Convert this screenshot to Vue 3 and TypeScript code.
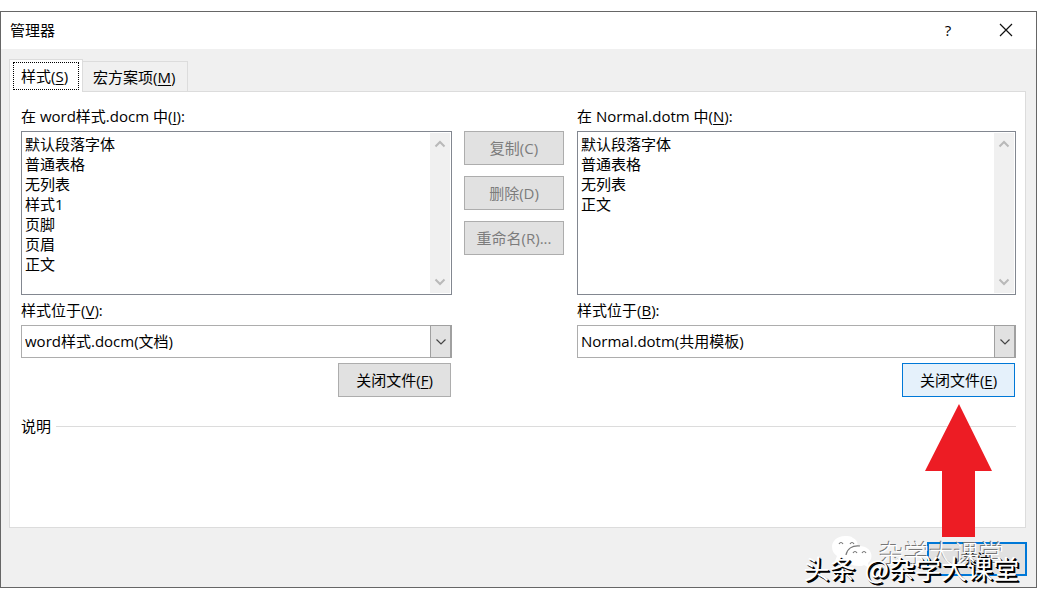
<script setup lang="ts">
import { ref } from 'vue'

interface Pane {
  id: string
  titleBefore: string
  titleKey: string
  styles: string[]
  sourceKey: string
  source: string
  closeKey: string
  active: boolean
}

const left: Pane = {
  id: 'left',
  titleBefore: '在 word样式.docm 中',
  titleKey: 'I',
  styles: ['默认段落字体', '普通表格', '无列表', '样式1', '页脚', '页眉', '正文'],
  sourceKey: 'V',
  source: 'word样式.docm(文档)',
  closeKey: 'F',
  active: false,
}

const right: Pane = {
  id: 'right',
  titleBefore: '在 Normal.dotm 中',
  titleKey: 'N',
  styles: ['默认段落字体', '普通表格', '无列表', '正文'],
  sourceKey: 'B',
  source: 'Normal.dotm(共用模板)',
  closeKey: 'E',
  active: true,
}

const panes: Pane[] = [left, right]
const actions: string[] = ['复制(C)', '删除(D)', '重命名(R)...']
const tab = ref<'styles' | 'macros'>('styles')
</script>

<template>
  <main class="dialog">
    <header class="titlebar">
      <h1 class="title">管理器</h1>
      <button class="caption" type="button">?</button>
      <button class="caption" type="button" aria-label="关闭窗口">
        <svg width="14" height="14" viewBox="0 0 14 14">
          <path d="M1 1L13 13M13 1L1 13" stroke="#111" stroke-width="1.2" fill="none" />
        </svg>
      </button>
    </header>

    <div class="tabs" role="tablist">
      <button class="tab" :class="{ current: tab === 'styles' }" role="tab" type="button" @click="tab = 'styles'">
        <span class="tab-text">样式(<u>S</u>)</span>
      </button>
      <button class="tab" :class="{ current: tab === 'macros' }" role="tab" type="button" @click="tab = 'macros'">
        <span class="tab-text">宏方案项(<u>M</u>)</span>
      </button>
    </div>

    <section class="panel">
      <div class="columns">
        <div v-for="pane in panes" :key="pane.id" class="pane" :class="pane.id">
          <label class="label" :for="pane.id + '-list'">{{ pane.titleBefore }}(<u>{{ pane.titleKey }}</u>):</label>
          <div class="listbox">
            <select :id="pane.id + '-list'" class="list" multiple size="7">
              <option v-for="name in pane.styles" :key="name" class="item">{{ name }}</option>
            </select>
            <div class="scrollbar">
              <svg width="12" height="8" viewBox="0 0 12 8">
                <path d="M1.5 6.5L6 2L10.5 6.5" stroke="#b9b9b9" stroke-width="2" fill="none" />
              </svg>
              <svg width="12" height="8" viewBox="0 0 12 8">
                <path d="M1.5 1.5L6 6L10.5 1.5" stroke="#b9b9b9" stroke-width="2" fill="none" />
              </svg>
            </div>
          </div>
          <label class="label source-label" :for="pane.id + '-source'">样式位于(<u>{{ pane.sourceKey }}</u>):</label>
          <div class="combo">
            <select :id="pane.id + '-source'" class="source">
              <option>{{ pane.source }}</option>
            </select>
            <span class="drop">
              <svg width="12" height="8" viewBox="0 0 12 8">
                <path d="M1.5 1.5L6 6L10.5 1.5" stroke="#444" stroke-width="1.2" fill="none" />
              </svg>
            </span>
          </div>
          <button class="button close" :class="{ hot: pane.active }" type="button">关闭文件(<u>{{ pane.closeKey }}</u>)</button>
        </div>
        <div class="actions">
          <button v-for="action in actions" :key="action" class="button" type="button" disabled>{{ action }}</button>
        </div>
      </div>
      <div class="description">
        <h2 class="description-title">说明</h2>
        <span class="rule"></span>
      </div>
    </section>

    <footer class="footer">
      <button class="button default" type="button">关闭</button>
    </footer>

    <svg class="arrow" width="67" height="133" viewBox="0 0 67 133">
      <path d="M34 0L67 67H50V133H17V67H0Z" fill="#ed1c24" />
    </svg>

    <div class="channel">
      <svg width="42" height="34" viewBox="0 0 42 34">
        <path d="M14 1C6 1 1 6 1 12C1 16 3 19 6 21L4 26L10 23C12 24 15 24 17 23C28 22 30 6 22 3C20 1 17 1 14 1Z" fill="#fff" />
        <path d="M28 11C20 11 15 16 15 21C15 27 20 31 28 31C30 31 32 31 33 30L38 33L37 28C44 22 40 11 28 11Z" fill="#fff" />
        <path d="M15 20C16 14 21 10 29 11M8 9Q10 6 12 9M19 9Q21 6 23 9M22 18Q24 15 26 18M31 18Q33 15 35 18" stroke="#777" stroke-width="1.2" fill="none" />
      </svg>
      <span>杂学大课堂</span>
    </div>
    <div class="credit"><span>头条</span><span>@杂学大课堂</span></div>
  </main>
</template>

<style>
body {
  margin: 0;
  background: #fff;
}
</style>

<style scoped>
.dialog {
  position: relative;
  box-sizing: border-box;
  margin-top: 11px;
  border: 1px solid #666;
  background: #f0f0f0;
  color: #000;
  font: 15px/20px "Open Sans", "Noto Sans CJK SC", sans-serif;
}
.dialog button,
.dialog select {
  box-sizing: border-box;
  margin: 0;
  border-radius: 0;
  color: #000;
  font: inherit;
}
u {
  text-underline-offset: 2px;
  text-decoration-thickness: 1px;
}
.titlebar {
  display: flex;
  align-items: center;
  height: 35px;
  padding: 0 1px 2px 9px;
  background: #fff;
}
.title {
  flex: 1;
  margin: 0;
  font-size: 15px;
  font-weight: 400;
}
.caption {
  display: flex;
  align-items: center;
  justify-content: center;
  width: 58px;
  height: 35px;
  padding: 0;
  border: 0;
  background: none;
}
.tabs {
  display: flex;
  align-items: flex-end;
  height: 42px;
  padding-left: 8px;
}
.tab {
  height: 30px;
  padding: 0 12px 0 10px;
  border: 1px solid #dcdcdc;
  border-left: 0;
  border-bottom: 0;
  background: #f0f0f0;
}
.tab.current {
  position: relative;
  z-index: 1;
  height: 33px;
  margin-bottom: -1px;
  padding: 2px 3px;
  border-left: 1px solid #dcdcdc;
  background: #fff;
}
.tab-text {
  white-space: nowrap;
}
.current .tab-text {
  display: block;
  padding: 3px 10px 3px 7px;
  border: 1px dotted #000;
}
.panel {
  box-sizing: border-box;
  height: 437px;
  margin: 0 10px 0 8px;
  padding: 14px 9px 0 11px;
  border: 1px solid #dcdcdc;
  background: #fff;
}
.columns {
  display: grid;
  grid-template-columns: 431fr 101px 439fr;
  column-gap: 12px;
}
.pane {
  display: flex;
  flex-direction: column;
  min-width: 0;
}
.left {
  grid-area: 1 / 1;
}
.right {
  grid-area: 1 / 3;
}
.actions {
  grid-area: 1 / 2;
  display: flex;
  flex-direction: column;
  gap: 11px;
  padding: 25px 1px 0 0;
}
.label {
  height: 25px;
}
.source-label {
  margin-top: 5px;
}
.listbox {
  display: flex;
  box-sizing: border-box;
  height: 164px;
  padding: 1px;
  border: 1px solid #828790;
}
.list {
  flex: 1;
  min-width: 0;
  height: 160px;
  padding: 0;
  border: 0;
  outline: 0;
  background: #fff;
  overflow: hidden;
}
.item {
  box-sizing: border-box;
  height: 20px;
  min-height: 20px;
  padding: 0 2px;
  line-height: 18px;
}
.scrollbar {
  display: flex;
  flex-direction: column;
  align-items: center;
  justify-content: space-between;
  width: 20px;
  padding: 7px 0;
  box-sizing: border-box;
  background: #f0f0f0;
}
.combo {
  position: relative;
  height: 33px;
}
.source {
  appearance: none;
  width: 100%;
  height: 33px;
  border: 1px solid #adadad;
  background: #fff;
}
.dialog .source {
  padding: 0 24px 2px 3px;
}
.drop {
  position: absolute;
  top: 0;
  right: 0;
  bottom: 0;
  display: flex;
  align-items: center;
  justify-content: center;
  box-sizing: border-box;
  width: 22px;
  border: 1px solid #a0a0a0;
  border-right-width: 2px;
  background: #e1e1e1;
  pointer-events: none;
}
.button {
  height: 34px;
  padding: 0;
  border: 1px solid #adadad;
  background: #e1e1e1;
}
.dialog .button:disabled {
  color: #7c7c7c;
}
.dialog .close {
  align-self: flex-end;
  width: 113px;
  margin: 5px 1px 0 0;
}
.hot {
  border-color: #0078d7;
  background: #e5f1fb;
}
.description {
  display: flex;
  align-items: center;
  gap: 5px;
  margin-top: 19px;
}
.description-title {
  margin: 0;
  font-size: 15px;
  font-weight: 400;
}
.rule {
  flex: 1;
  height: 1px;
  background: #dcdcdc;
}
.footer {
  display: flex;
  justify-content: flex-end;
  padding: 14px 9px 11px;
}
.default {
  width: 100px;
  border: 2px solid #0078d7;
}
.arrow {
  position: absolute;
  top: 392px;
  right: 44px;
}
.channel {
  position: absolute;
  right: 32px;
  bottom: 18px;
  display: flex;
  align-items: center;
  gap: 6px;
  color: #fff;
  font: 300 25px/34px "Noto Sans CJK SC", sans-serif;
  text-shadow: -1px -1px 0 #777;
  white-space: nowrap;
}
.credit {
  position: absolute;
  right: 17px;
  bottom: 2px;
  display: flex;
  gap: 9px;
  color: #fff;
  font: 400 26px/34px "Noto Sans CJK SC", sans-serif;
  text-shadow: 1px 1px 0 #000, 2px 2px 0 #000;
  white-space: nowrap;
}
</style>
